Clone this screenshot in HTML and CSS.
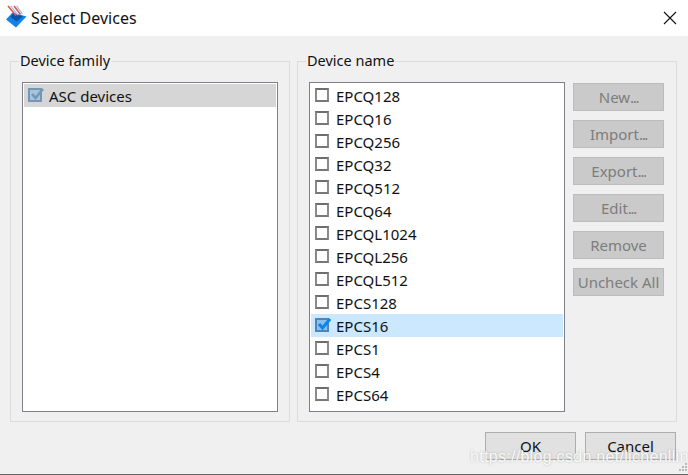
FILE: index.html
```html
<!DOCTYPE html>
<html lang="en">
<head>
<meta charset="utf-8">
<title>Select Devices</title>
<link rel="stylesheet" href="styles.css">
</head>
<body>
<div class="dialog">
  <header class="titlebar">
    <svg class="logo" width="22" height="23" viewBox="0 0 22 23">
      <path d="M1 14.5 L7.5 7.5 L21.5 11.5 L11 22.5 Z" fill="#1283ea"/>
      <path d="M5.5 12 L8 8 L18 11.5 L11.5 16.5 Z" fill="#0a55a6"/>
      <path d="M3 1 L11 10.5 M9 1 L15.5 9.5" stroke="#e2554f" stroke-width="1.6" fill="none"/>
      <path d="M5.5 1 L13 10 M11.5 1 L17.5 9" stroke="#a9c8ee" stroke-width="1.4" fill="none"/>
    </svg>
    <span class="title">Select Devices</span>
    <svg class="close" width="14" height="14" viewBox="0 0 14 14">
      <path d="M1 1 L13 13 M13 1 L1 13" stroke="#111" stroke-width="1.1" fill="none"/>
    </svg>
  </header>
  <main class="content">
    <div class="groups">
      <fieldset class="group group-family">
        <legend class="legend">Device family</legend>
        <div class="list">
          <div class="row row-grey"><span class="check check-grey"><svg width="15" height="15" viewBox="0 0 15 15"><path d="M3 7 L6.5 11 L14 2" stroke="#7297b8" stroke-width="2.6" fill="none"/></svg></span>ASC devices</div>
        </div>
      </fieldset>
      <fieldset class="group group-name">
        <legend class="legend">Device name</legend>
        <div class="name-body">
          <div class="list">
            <div class="row"><span class="check"></span>EPCQ128</div>
            <div class="row"><span class="check"></span>EPCQ16</div>
            <div class="row"><span class="check"></span>EPCQ256</div>
            <div class="row"><span class="check"></span>EPCQ32</div>
            <div class="row"><span class="check"></span>EPCQ512</div>
            <div class="row"><span class="check"></span>EPCQ64</div>
            <div class="row"><span class="check"></span>EPCQL1024</div>
            <div class="row"><span class="check"></span>EPCQL256</div>
            <div class="row"><span class="check"></span>EPCQL512</div>
            <div class="row"><span class="check"></span>EPCS128</div>
            <div class="row row-blue"><span class="check check-blue"><svg width="15" height="15" viewBox="0 0 15 15"><path d="M3 7 L6.5 11 L14 2" stroke="#0a84f0" stroke-width="3" fill="none"/></svg></span>EPCS16</div>
            <div class="row"><span class="check"></span>EPCS1</div>
            <div class="row"><span class="check"></span>EPCS4</div>
            <div class="row"><span class="check"></span>EPCS64</div>
          </div>
          <div class="side">
            <button class="btn btn-off">New<span class="dots">...</span></button>
            <button class="btn btn-off">Import<span class="dots">...</span></button>
            <button class="btn btn-off">Export<span class="dots">...</span></button>
            <button class="btn btn-off">Edit<span class="dots">...</span></button>
            <button class="btn btn-off">Remove</button>
            <button class="btn btn-off">Uncheck All</button>
          </div>
        </div>
      </fieldset>
    </div>
    <footer class="actions">
      <button class="btn btn-on">OK</button>
      <button class="btn btn-on">Cancel</button>
    </footer>
  </main>
  <div class="watermark">https://blog.csdn.net/lichenllin</div>
  <svg class="grip" width="10" height="10" viewBox="0 0 10 10">
    <path d="M7 1h2v2h-2z M7 4h2v2h-2z M4 4h2v2h-2z M7 7h2v2h-2z M4 7h2v2h-2z M1 7h2v2h-2z" fill="#b8b8b8"/>
  </svg>
</div>
</body>
</html>
```
FILE: styles.css
```css
* { box-sizing: border-box; }
html, body { margin: 0; padding: 0; }
body {
  width: 688px;
  height: 475px;
  overflow: hidden;
  font-family: "Noto Sans", sans-serif;
  font-size: 15px;
  color: #111;
  background: #f0f0f0;
}
.dialog {
  position: relative;
  width: 688px;
  height: 475px;
  display: flex;
  flex-direction: column;
  border-bottom: 1px solid #666;
}
.titlebar {
  height: 36px;
  background: #fff;
  display: flex;
  align-items: center;
  padding: 0 11px 0 5px;
  flex: none;
}
.logo { flex: none; margin-top: -3px; }
.title { margin-left: 4px; font-size: 16px; flex: 1; margin-top: -1px; }
.close { flex: none; margin-top: -1px; }
.content {
  flex: 1;
  padding: 14px 11px 0 10px;
  display: flex;
  flex-direction: column;
}
.groups { display: flex; gap: 7px; height: 372px; flex: none; }
.group {
  margin: 0;
  border: 1px solid #dcdcdc;
  padding: 10px 11px 9px 11px;
  min-width: 0;
}
.group-family { width: 280px; }
.group-name { width: 380px; }
.legend { padding: 0 1px 2px; margin-left: -3px; font-size: 14.5px; line-height: 20px; }
.list {
  background: #fff;
  border: 1px solid #7f818a;
  padding: 1px;
  width: 256px;
  height: 330px;
  flex: none;
}
.row {
  height: 23px;
  display: flex;
  align-items: center;
  font-size: 15px;
  padding-left: 4px;
  white-space: nowrap;
}
.row-grey { background: #d6d6d6; }
.row-blue { background: #cce8ff; }
.check {
  width: 14px;
  height: 14px;
  margin-right: 7px;
  margin-top: -1px;
  background: #fff;
  border: 2px solid #8a8a8a;
  border-bottom-color: #777;
  border-top-color: #6e6e6e;
  flex: none;
  position: relative;
}
.check svg { position: absolute; left: -1px; top: -3px; }
.check-grey { background: #a9c3d9; border-color: #7297b8; }
.check-blue { background: #8cc0ee; border-color: #4b87b8; }
.name-body { display: flex; gap: 8px; }
.side {
  display: flex;
  flex-direction: column;
  gap: 9px;
  padding-top: 1px;
}
.btn {
  width: 91px;
  height: 28px;
  padding: 0;
  font-family: inherit;
  font-size: 15px;
  border-radius: 0;
}
.btn-off { background: #cacaca; border: 1px solid #bcbcbc; color: #7d7d7d; }
.btn-on { background: #e1e1e1; border: 1px solid #adadad; color: #111; }
.dots { letter-spacing: -1.3px; }
.actions {
  display: flex;
  justify-content: flex-end;
  gap: 9px;
  padding: 10px 1px 0 0;
}
.watermark {
  position: absolute;
  left: 470px;
  top: 448px;
  font-family: "Liberation Sans", sans-serif;
  font-size: 16px;
  letter-spacing: 0.3px;
  color: rgba(255, 255, 255, 0.9);
  white-space: nowrap;
  text-shadow: 0 0 2px rgba(150, 150, 150, 0.7);
}
.grip { position: absolute; right: 0; bottom: 2px; }
```
